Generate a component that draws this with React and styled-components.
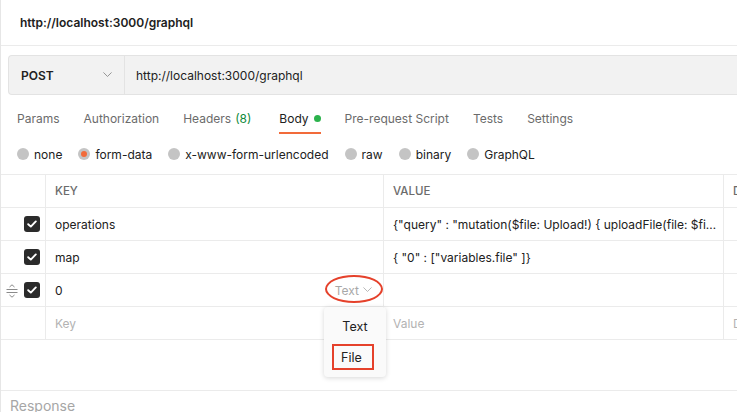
import styled, { createGlobalStyle } from "styled-components";

const GlobalStyle = createGlobalStyle`
  html, body {
    margin: 0;
    padding: 0;
    background: #ffffff;
    overflow: hidden;
  }
  body {
    font-family: Inter, "Noto Sans", sans-serif;
    color: #212121;
  }
`;

const tabs = [
  { label: "Params" },
  { label: "Authorization" },
  { label: "Headers", count: "(8)" },
  { label: "Body", active: true, dot: true },
  { label: "Pre-request Script" },
  { label: "Tests" },
  { label: "Settings" },
];

const bodyTypes = [
  { label: "none" },
  { label: "form-data", checked: true },
  { label: "x-www-form-urlencoded" },
  { label: "raw" },
  { label: "binary" },
  { label: "GraphQL" },
];

const rows = [
  {
    key: "operations",
    value:
      '{"query" : "mutation($file: Upload!) { uploadFile(file: $file) { id url } }", "variables": { "file": null } }',
  },
  { key: "map", value: '{ "0" : ["variables.file" ]}' },
  { key: "0", value: "", handle: true, typeMenu: true },
];

function Check() {
  return (
    <CheckBox>
      <svg width="10" height="8" viewBox="0 0 10 8">
        <path
          d="M1.2 4.2 L3.8 6.6 L8.8 1.4"
          fill="none"
          stroke="#fff"
          strokeWidth="1.9"
          strokeLinecap="round"
          strokeLinejoin="round"
        />
      </svg>
    </CheckBox>
  );
}

function DragHandle() {
  return (
    <svg width="12" height="14" viewBox="0 0 12 14">
      <path
        d="M3.5 3 L6 0.8 L8.5 3 M0.5 5.5 H11.5 M0.5 8.5 H11.5 M3.5 11 L6 13.2 L8.5 11"
        fill="none"
        stroke="#8a8a8a"
        strokeWidth="1"
      />
    </svg>
  );
}

function Chevron({ color = "#8a8a8a", size = 9 }) {
  return (
    <svg width={size} height={size * 0.6} viewBox="0 0 10 6">
      <path d="M0.5 0.5 L5 5 L9.5 0.5" fill="none" stroke={color} strokeWidth="1" />
    </svg>
  );
}

export default function App() {
  return (
    <>
      <GlobalStyle />
      <Page>
        <TitleBar>http://localhost:3000/graphql</TitleBar>

        <RequestBar>
          <Method>
            POST
            <Chevron />
          </Method>
          <Url>http://localhost:3000/graphql</Url>
        </RequestBar>

        <TabRow>
          {tabs.map((t) => (
            <Tab key={t.label} $active={t.active}>
              {t.label}
              {t.count && <Count>{t.count}</Count>}
              {t.dot && <Dot />}
            </Tab>
          ))}
        </TabRow>

        <RadioRow>
          {bodyTypes.map((b) => (
            <RadioItem key={b.label}>
              <Radio $checked={b.checked} />
              {b.label}
            </RadioItem>
          ))}
        </RadioRow>

        <Table>
          <HeadCell />
          <HeadCell>KEY</HeadCell>
          <HeadCell>VALUE</HeadCell>
          <HeadCell>D</HeadCell>

          {rows.map((r) => (
            <Row key={r.key}>
              <CheckCell>
                {r.handle && (
                  <Handle>
                    <DragHandle />
                  </Handle>
                )}
                <Check />
              </CheckCell>
              <Cell>
                {r.key}
                {r.typeMenu && (
                  <>
                    <TypeSelect>
                      Text
                      <Chevron color="#b0b0b0" size={9} />
                    </TypeSelect>
                    <Circle />
                    <Menu>
                      <MenuItem>Text</MenuItem>
                      <MenuItem $marked>File</MenuItem>
                    </Menu>
                  </>
                )}
              </Cell>
              <Cell $tight>
                <Ellipsis>{r.value}</Ellipsis>
              </Cell>
              <Cell />
            </Row>
          ))}

          <Row>
            <CheckCell />
            <Cell $placeholder>Key</Cell>
            <Cell $placeholder>Value</Cell>
            <Cell $placeholder>D</Cell>
          </Row>
        </Table>

        <Spacer />

        <ResponseBar>Response</ResponseBar>
      </Page>
    </>
  );
}

const Page = styled.div`
  width: 737px;
  height: 412px;
  border-left: 1px solid #e6e6e6;
  box-sizing: border-box;
  overflow: hidden;
`;

const TitleBar = styled.div`
  height: 45px;
  display: flex;
  align-items: center;
  padding-left: 19px;
  font-size: 12px;
  font-weight: 600;
  color: #212121;
  border-bottom: 1px solid #ebebeb;
`;

const RequestBar = styled.div`
  display: flex;
  height: 38px;
  margin: 9px 0 0 7px;
  background: #f2f2f2;
  border: 1px solid #e3e3e3;
  border-right: none;
  border-radius: 4px 0 0 4px;
`;

const Method = styled.div`
  width: 116px;
  box-sizing: border-box;
  padding: 0 12px 0 12px;
  display: flex;
  align-items: center;
  justify-content: space-between;
  font-size: 12px;
  font-weight: 600;
  color: #212121;
  border-right: 1px solid #e3e3e3;
`;

const Url = styled.div`
  display: flex;
  align-items: center;
  padding-left: 11px;
  font-size: 12px;
  color: #212121;
`;

const TabRow = styled.div`
  display: flex;
  gap: 24px;
  padding-left: 16px;
  margin-top: 8px;
  height: 31px;
`;

const Tab = styled.div`
  display: flex;
  align-items: center;
  gap: 4px;
  font-size: 12px;
  color: ${(p) => (p.$active ? "#212121" : "#6b6b6b")};
  box-sizing: border-box;
  padding-top: 1px;
  border-bottom: 2px solid ${(p) => (p.$active ? "#f26b3a" : "transparent")};
`;

const Count = styled.span`
  color: #0f8a3b;
  margin-right: 4px;
`;

const Dot = styled.span`
  width: 7px;
  height: 7px;
  border-radius: 50%;
  background: #2bb24c;
  margin-left: 1px;
`;

const RadioRow = styled.div`
  display: flex;
  align-items: center;
  gap: 16px;
  height: 40px;
  padding-left: 16px;
`;

const RadioItem = styled.label`
  display: flex;
  align-items: center;
  gap: 5px;
  font-size: 12px;
  color: #212121;
`;

const Radio = styled.span`
  width: 12px;
  height: 12px;
  border-radius: 50%;
  background: #c4c4c4;
  position: relative;
  &::after {
    content: "";
    display: ${(p) => (p.$checked ? "block" : "none")};
    position: absolute;
    top: 3px;
    left: 3px;
    width: 6px;
    height: 6px;
    border-radius: 50%;
    background: #f26b3a;
  }
`;

const Table = styled.div`
  display: grid;
  grid-template-columns: 45px 338px 340px 1fr;
  grid-auto-rows: 33px;
  border-top: 1px solid #ebebeb;
`;

const Row = styled.div`
  display: contents;
`;

const HeadCell = styled.div`
  display: flex;
  align-items: center;
  padding-left: 9px;
  font-size: 11.5px;
  font-weight: 500;
  color: #6b6b6b;
  border-bottom: 1px solid #ebebeb;
  border-right: 1px solid #ebebeb;
  overflow: hidden;
  white-space: nowrap;
  &:first-child {
    padding-left: 0;
  }
`;

const Cell = styled.div`
  position: relative;
  display: flex;
  align-items: center;
  padding: 0 ${(p) => (p.$tight ? "5px" : "10px")} 0 9px;
  font-size: 12px;
  color: ${(p) => (p.$placeholder ? "#b3b3b3" : "#212121")};
  border-bottom: 1px solid #ebebeb;
  border-right: 1px solid #ebebeb;
  min-width: 0;
  white-space: nowrap;
`;

const CheckCell = styled(Cell)`
  padding: 0;
  justify-content: flex-end;
  padding-right: 5px;
`;

const Handle = styled.span`
  position: absolute;
  left: 5px;
  top: 10px;
  display: flex;
`;

const CheckBox = styled.span`
  width: 16px;
  height: 16px;
  border-radius: 3px;
  background: #2b2b2b;
  display: flex;
  align-items: center;
  justify-content: center;
`;

const Ellipsis = styled.span`
  overflow: hidden;
  text-overflow: ellipsis;
  white-space: nowrap;
  display: block;
`;

const TypeSelect = styled.span`
  margin-left: auto;
  margin-right: 1px;
  display: flex;
  align-items: center;
  gap: 4px;
  font-size: 12px;
  color: #a8a8a8;
`;

const Circle = styled.span`
  position: absolute;
  right: 0px;
  top: 1px;
  width: 58px;
  height: 28px;
  border: 2px solid #e5412b;
  border-radius: 50%;
  box-sizing: border-box;
  pointer-events: none;
`;

const Menu = styled.div`
  position: absolute;
  top: 33px;
  left: 278px;
  width: 62px;
  padding: 6px 0 7px;
  background: #fafafa;
  border-radius: 4px;
  box-shadow: 0 1px 5px rgba(0, 0, 0, 0.16);
  display: flex;
  flex-direction: column;
  align-items: center;
  gap: 5px;
  z-index: 2;
`;

const MenuItem = styled.div`
  font-size: 12.5px;
  color: #212121;
  padding: 0 7px;
  height: 26px;
  display: flex;
  align-items: center;
  box-sizing: border-box;
  margin-left: ${(p) => (p.$marked ? "-4px" : "0")};
  border: 2px solid ${(p) => (p.$marked ? "#e5412b" : "transparent")};
  width: ${(p) => (p.$marked ? "42px" : "auto")};
`;

const Spacer = styled.div`
  height: 50px;
  border-bottom: 1px solid #ebebeb;
`;

const ResponseBar = styled.div`
  padding: 6px 0 0 9px;
  font-size: 14px;
  color: #a6a6a6;
`;
